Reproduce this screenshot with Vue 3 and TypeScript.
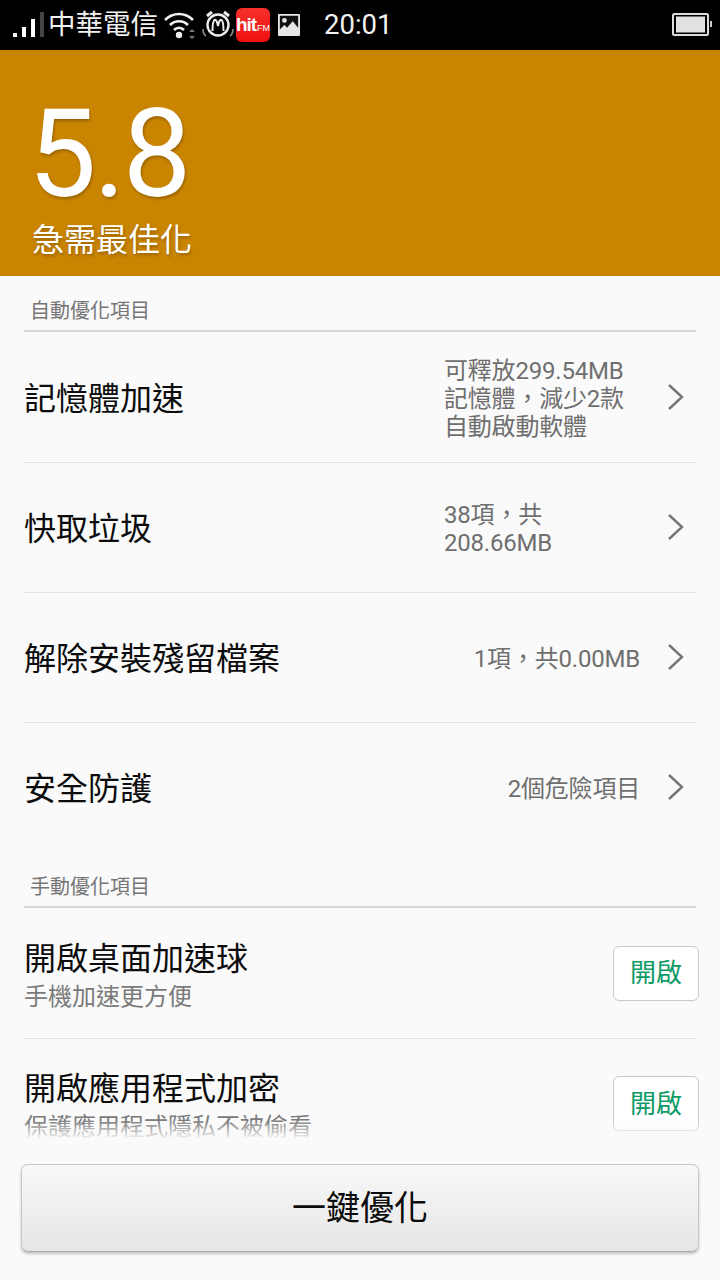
<template>
  <div class="screen">
    <div class="status-bar">
      <svg class="signal" width="34" height="30" viewBox="0 0 34 30">
        <rect x="0" y="23" width="4" height="4" fill="#fff" />
        <rect x="9" y="17" width="4" height="10" fill="#fff" />
        <rect x="18" y="9" width="4" height="18" fill="#fff" />
        <rect x="27" y="2" width="4" height="25" fill="#444" />
      </svg>
      <span class="carrier">中華電信</span>
      <svg class="wifi" width="32" height="28" viewBox="0 0 32 28">
        <path d="M1 9 C9 1 21 1 29 9" fill="none" stroke="#eee" stroke-width="2.6" />
        <path d="M6 14 C11 9 19 9 24 14" fill="none" stroke="#eee" stroke-width="2.6" />
        <path d="M10 19 C13 16 17 16 20 19" fill="none" stroke="#eee" stroke-width="2.6" />
        <circle cx="15" cy="24" r="3.2" fill="#eee" />
        <path d="M25 21 l3 -3 l3 3z M25 25 l3 3 l3 -3z" fill="#777" />
      </svg>
      <svg class="alarm" width="32" height="30" viewBox="0 0 32 30">
        <circle cx="16" cy="15" r="10.5" fill="none" stroke="#eee" stroke-width="2.4" />
        <path d="M5 6 L10 2 M27 6 L22 2" stroke="#eee" stroke-width="3" />
        <path d="M10.5 21 C10.5 7 14.5 7 16 16 C17.5 7 21.5 7 21.5 21" fill="none" stroke="#eee" stroke-width="2" />
        <path d="M1 19 Q1 24 4 26 M31 19 Q31 24 28 26" fill="none" stroke="#888" stroke-width="1.6" />
      </svg>
      <div class="app-icon"><b>hit</b><small>FM</small></div>
      <svg class="picture" width="22" height="22" viewBox="0 0 24 24">
        <rect width="24" height="24" rx="1" fill="#e6e6e6" />
        <path d="M2 2 H22 V15 L16 8 L10 15 L7 12 L2 17Z" fill="#111" />
        <circle cx="7" cy="7" r="2.6" fill="#e6e6e6" />
      </svg>
      <span class="clock">20:01</span>
      <svg class="battery" width="40" height="24" viewBox="0 0 40 24">
        <rect x="1" y="1" width="35" height="21" rx="1.5" fill="#000" stroke="#ddd" stroke-width="2" />
        <rect x="4" y="3.5" width="29" height="16" fill="#e2e2e2" />
        <rect x="38" y="8" width="2" height="6" fill="#ccc" />
      </svg>
    </div>

    <header class="hero">
      <div class="score">5.8</div>
      <div class="verdict">急需最佳化</div>
    </header>

    <main class="content">
      <h2 class="section-title">自動優化項目</h2>
      <div v-for="item in autoItems" :key="item.name" class="row auto-row">
        <span class="row-name">{{ item.name }}</span>
        <span class="row-detail" :class="{ stacked: item.stacked }">
          <span v-for="line in item.lines" :key="line" class="detail-line">{{ line }}</span>
        </span>
        <svg class="chevron" width="18" height="26" viewBox="0 0 18 26">
          <path d="M2 1 L15 13 L2 25" fill="none" stroke="#757575" stroke-width="2.4" />
        </svg>
      </div>

      <h2 class="section-title manual-title">手動優化項目</h2>
      <div v-for="item in manualItems" :key="item.name" class="row manual-row">
        <div class="manual-text">
          <div class="row-name">{{ item.name }}</div>
          <div class="row-sub">{{ item.sub }}</div>
        </div>
        <button class="open-btn">開啟</button>
      </div>
    </main>

    <footer class="footer">
      <div class="fade"></div>
      <div class="footer-body">
        <button class="optimize-btn">一鍵優化</button>
      </div>
    </footer>
  </div>
</template>

<script setup lang="ts">
interface AutoItem {
  name: string;
  lines: string[];
  stacked?: boolean;
}

const autoItems: AutoItem[] = [
  { name: '記憶體加速', lines: ['可釋放299.54MB', '記憶體，減少2款', '自動啟動軟體'], stacked: true },
  { name: '快取垃圾', lines: ['38項，共', '208.66MB'], stacked: true },
  { name: '解除安裝殘留檔案', lines: ['1項，共0.00MB'] },
  { name: '安全防護', lines: ['2個危險項目'] },
];

const manualItems = [
  { name: '開啟桌面加速球', sub: '手機加速更方便' },
  { name: '開啟應用程式加密', sub: '保護應用程式隱私不被偷看' },
];
</script>

<style>
html,
body {
  margin: 0;
  background: #fafafa;
}
</style>

<style scoped>
.screen {
  position: relative;
  width: 720px;
  height: 1280px;
  overflow: hidden;
  background: #fafafa;
  font-family: Roboto, "Noto Sans CJK TC", sans-serif;
}

.status-bar {
  height: 50px;
  background: #000;
  display: flex;
  align-items: center;
  padding-left: 13px;
  color: #f2f2f2;
  box-sizing: border-box;
}

.signal {
  margin-right: 1px;
}

.carrier {
  font-size: 27.5px;
  line-height: 50px;
  margin-right: 6px;
}

.wifi {
  margin-right: 6px;
}

.alarm {
  margin-right: 2px;
}

.app-icon {
  width: 34px;
  height: 34px;
  border-radius: 6px;
  background: linear-gradient(#f5302a, #f01010);
  color: #fff;
  display: flex;
  align-items: baseline;
  justify-content: center;
  line-height: 33px;
  margin-right: 8px;
  font-family: "Liberation Sans", sans-serif;
}

.app-icon b {
  font-size: 19px;
  letter-spacing: -1px;
}

.app-icon small {
  font-size: 9px;
  margin-left: 1px;
}

.picture {
  margin-right: 24px;
}

.clock {
  font-size: 27.5px;
  line-height: 50px;
}

.battery {
  margin-left: auto;
  margin-right: 8px;
}

.hero {
  height: 226px;
  background: #ca8500;
  color: #fff;
  padding: 42px 0 0 28px;
  box-sizing: border-box;
  text-shadow: 1px 2px 3px rgba(90, 55, 0, 0.45);
}

.score {
  font-size: 122px;
  line-height: 126px;
  letter-spacing: -3px;
}

.verdict {
  font-size: 32px;
  line-height: 44px;
  padding-left: 4px;
}

.content {
  padding: 0 24px;
}

.section-title {
  margin: 0 0 1px;
  height: 56px;
  box-sizing: border-box;
  padding: 21px 0 0 6px;
  font-size: 20px;
  line-height: 28px;
  font-weight: 400;
  color: #757575;
  border-bottom: 2px solid #d8d8d8;
}

.manual-title {
  height: 55px;
  padding-top: 20px;
}

.row {
  display: flex;
  align-items: center;
  height: 130px;
  box-sizing: border-box;
  padding-top: 2px;
  border-bottom: 1px solid #e4e4e4;
}

.row:nth-of-type(4) {
  border-bottom: none;
}

.row-name {
  font-size: 32px;
  line-height: 42px;
  color: #0c0c0c;
}

.row-detail {
  margin-left: auto;
  font-size: 24px;
  line-height: 28px;
  letter-spacing: -0.2px;
  color: #6f6f6f;
  text-align: right;
  display: flex;
  flex-direction: column;
}

.row-detail.stacked {
  width: 196px;
  text-align: left;
}

.chevron {
  margin: 0 11px 4px 27px;
  flex: none;
}

.manual-row {
  padding-top: 0;
  justify-content: space-between;
}

.manual-row:last-child {
  border-bottom: none;
}

.manual-text {
  padding-top: 2px;
}

.row-sub {
  margin-top: 2px;
  font-size: 24px;
  line-height: 30px;
  color: #7a7a7a;
}

.open-btn {
  width: 86px;
  height: 55px;
  margin: 0 -3px 1px 0;
  padding: 0 0 5px;
  border: 1px solid #c9c9c9;
  border-radius: 6px;
  background: #fff;
  color: #0e9a67;
  font: inherit;
  font-size: 26px;
}

.footer {
  position: absolute;
  left: 0;
  right: 0;
  bottom: 0;
}

.fade {
  height: 20px;
  background: linear-gradient(rgba(250, 250, 250, 0), #fafafa);
}

.footer-body {
  background: #fafafa;
  padding: 24px 21px 28px;
}

.optimize-btn {
  display: block;
  width: 678px;
  height: 88px;
  padding: 0 0 5px;
  border: 1px solid #c8c8c8;
  border-bottom-color: #aaa;
  border-radius: 7px;
  background: linear-gradient(#f8f8f8, #e6e6e6);
  box-shadow: 0 2px 3px rgba(0, 0, 0, 0.22);
  color: #0c0c0c;
  font: inherit;
  font-size: 34px;
}
</style>
